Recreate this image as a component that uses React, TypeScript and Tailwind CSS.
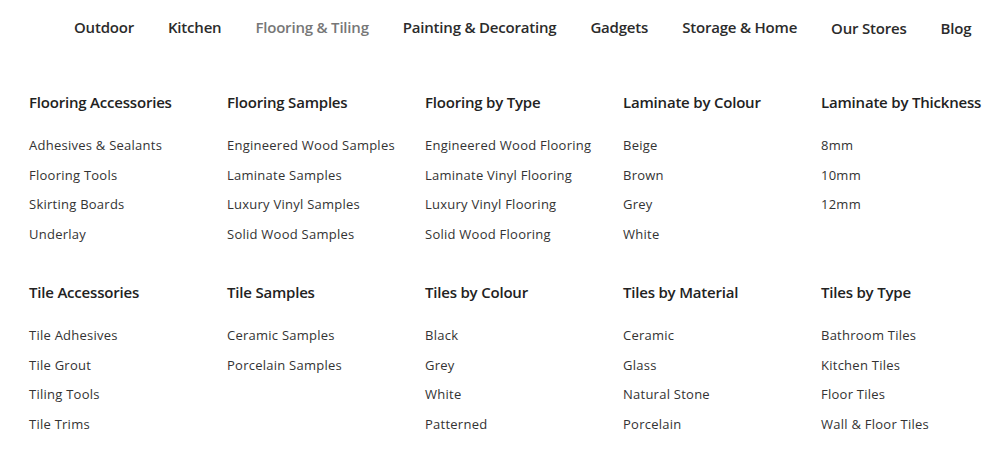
const navItems = [
  { label: "Outdoor", active: false },
  { label: "Kitchen", active: false },
  { label: "Flooring & Tiling", active: true },
  { label: "Painting & Decorating", active: false },
  { label: "Gadgets", active: false },
  { label: "Storage & Home", active: false },
  { label: "Our Stores", active: false, low: true },
  { label: "Blog", active: false, low: true },
];

const groups = [
  [
    { title: "Flooring Accessories", links: ["Adhesives & Sealants", "Flooring Tools", "Skirting Boards", "Underlay"] },
    { title: "Flooring Samples", links: ["Engineered Wood Samples", "Laminate Samples", "Luxury Vinyl Samples", "Solid Wood Samples"] },
    { title: "Flooring by Type", links: ["Engineered Wood Flooring", "Laminate Vinyl Flooring", "Luxury Vinyl Flooring", "Solid Wood Flooring"] },
    { title: "Laminate by Colour", links: ["Beige", "Brown", "Grey", "White"] },
    { title: "Laminate by Thickness", links: ["8mm", "10mm", "12mm"] },
  ],
  [
    { title: "Tile Accessories", links: ["Tile Adhesives", "Tile Grout", "Tiling Tools", "Tile Trims"] },
    { title: "Tile Samples", links: ["Ceramic Samples", "Porcelain Samples"] },
    { title: "Tiles by Colour", links: ["Black", "Grey", "White", "Patterned"] },
    { title: "Tiles by Material", links: ["Ceramic", "Glass", "Natural Stone", "Porcelain"] },
    { title: "Tiles by Type", links: ["Bathroom Tiles", "Kitchen Tiles", "Floor Tiles", "Wall & Floor Tiles"] },
  ],
];

export default function App() {
  return (
    <div className="w-[1001px] h-[462px] bg-white overflow-hidden font-['Open_Sans',sans-serif]">
      {/* Top nav */}
      <nav className="flex items-center gap-[34px] pl-[74px] h-[54px]">
        {navItems.map((item) => (
          <a
            key={item.label}
            href="#"
            className={`text-[15px] font-semibold tracking-[-0.2px] whitespace-nowrap ${
              item.active ? "text-[#777777]" : "text-[#2b2b2b]"
            } ${item.low ? "mt-[2px]" : ""}`}
          >
            {item.label}
          </a>
        ))}
      </nav>

      {/* Mega menu */}
      <div className="flex flex-col gap-[30px] pl-[29px] pt-[36px]">
        {groups.map((group, gi) => (
          <div key={gi} className="grid grid-cols-[repeat(5,198px)]">
            {group.map((col) => (
              <div key={col.title}>
                <h3 className="text-[15px] font-semibold text-[#222222] leading-[24px] whitespace-nowrap tracking-[-0.2px]">
                  {col.title}
                </h3>
                <ul className="mt-[17px] flex flex-col">
                  {col.links.map((l) => (
                    <li key={l} className="text-[13px] leading-[29.7px] text-[#333333] tracking-[0.25px] whitespace-nowrap">
                      {l}
                    </li>
                  ))}
                </ul>
              </div>
            ))}
          </div>
        ))}
      </div>
    </div>
  );
}
